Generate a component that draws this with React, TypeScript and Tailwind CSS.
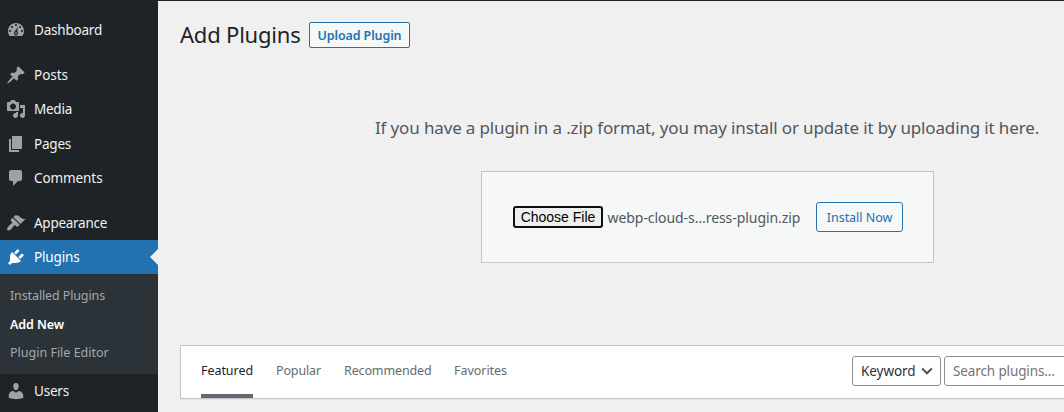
import type { ReactNode } from "react";

function Icon({ d }: { d: string }) {
  return (
    <svg viewBox="0 0 20 20" className="mr-2 ml-1.5 size-5 shrink-0 fill-current" fillRule="evenodd" aria-hidden="true">
      <path d={d} />
    </svg>
  );
}

const icons = {
  dashboard:
    "M3.76 16h12.48c1.1-1.37 1.76-3.11 1.76-5 0-4.42-3.58-8-8-8s-8 3.58-8 8c0 1.89.66 3.63 1.76 5zM10 4c.55 0 1 .45 1 1s-.45 1-1 1-1-.45-1-1 .45-1 1-1zM6 6c.55 0 1 .45 1 1s-.45 1-1 1-1-.45-1-1 .45-1 1-1zM14 6c.55 0 1 .45 1 1s-.45 1-1 1-1-.45-1-1 .45-1 1-1zM4 10c.55 0 1 .45 1 1s-.45 1-1 1-1-.45-1-1 .45-1 1-1zM16 10c.55 0 1 .45 1 1s-.45 1-1 1-1-.45-1-1 .45-1 1-1zM11.9 6.7L11.2 11c.5.5.8 1.2.8 2 0 1.5-.9 2.4-2 2.4s-2-.9-2-2.2c0-1 .5-1.7 1.1-2.3zM10 12.3c-.5 0-.9.4-.9.9s.4.9.9.9.9-.4.9-.9-.4-.9-.9-.9z",
  post: "M10.44 3.02l1.82-1.82 6.36 6.35-1.83 1.82c-1.05-.68-2.48-.57-3.41.36l-.75.75c-.92.93-1.04 2.35-.35 3.41l-1.83 1.82-2.41-2.41-2.8 2.79c-.42.42-3.38 2.71-3.8 2.29s1.86-3.39 2.28-3.81l2.79-2.79L4.1 9.36l1.83-1.82c1.05.69 2.48.57 3.4-.36l.75-.75c.93-.92 1.05-2.35.36-3.41z",
  media:
    "M13 11V4c0-.55-.45-1-1-1h-1.67L9.12 1.66C8.87 1.3 8.44 1 8 1H6c-.44 0-.87.3-1.12.66L3.67 3H2c-.55 0-1 .45-1 1v7c0 .55.45 1 1 1h10c.55 0 1-.45 1-1zM7 4.5c1.66 0 3 1.34 3 3s-1.34 3-3 3-3-1.34-3-3 1.34-3 3-3zM14 6h5v10.5c0 1.38-1.12 2.5-2.5 2.5S14 17.88 14 16.5s1.12-2.5 2.5-2.5c.17 0 .34.02.5.05V9h-3V6zm-4 8.05V13h2v3.5c0 1.38-1.12 2.5-2.5 2.5S7 17.88 7 16.5 8.12 14 9.5 14c.17 0 .34.02.5.05z",
  page: "M6 15V2h10v13H6zm-1 1h8v2H3V5h2v11z",
  comments: "M5 2h9c1.1 0 2 .9 2 2v7c0 1.1-.9 2-2 2h-2l-5 5v-5H5c-1.1 0-2-.9-2-2V4c0-1.1.9-2 2-2z",
  appearance:
    "M14.48 11.06L7.41 3.99l1.5-1.5c.5-.56 2.3-.47 3.51.32 1.21.8 1.43 1.28 2.91 2.1 1.18.64 2.45 1.26 4.45.85zm-.71.71L6.7 4.7 4.93 6.47c-.39.39-.39 1.02 0 1.41l1.06 1.06c.39.39.39 1.03 0 1.42-.6.6-1.43 1.11-2.21 1.69-.35.26-.7.53-1.01.84C1.43 14.23.4 16.08 1.4 17.07c.99 1 2.84-.03 4.18-1.36.31-.31.58-.66.85-1.02.57-.78 1.08-1.61 1.69-2.21.39-.39 1.02-.39 1.41 0l1.06 1.06c.39.39 1.02.39 1.41 0z",
  plugins:
    "M13.11 4.36L9.87 7.6 8 5.73l3.24-3.24c.35-.34 1.05-.2 1.56.32.52.51.66 1.21.31 1.55zm-8 1.77l.91-1.12 9.01 9.01-1.19.84c-.71.71-2.63 1.16-3.82 1.16H6.14L4.9 17.26c-.59.59-1.54.59-2.12 0-.59-.58-.59-1.53 0-2.12l1.24-1.24v-3.88c0-1.13.4-3.19 1.09-3.89zm7.26 3.97l3.24-3.24c.34-.35 1.04-.21 1.55.31.52.51.66 1.21.31 1.55l-3.24 3.25z",
  users:
    "M10 9.25c-2.27 0-2.73-3.44-2.73-3.44C7 4.02 7.82 2 9.97 2c2.16 0 2.98 2.02 2.71 3.81 0 0-.41 3.44-2.68 3.44zm0 2.57L12.72 10c2.39 0 4.52 2.33 4.52 4.53v2.49s-3.65 1.13-7.24 1.13c-3.65 0-7.24-1.13-7.24-1.13v-2.49c0-2.25 1.94-4.48 4.47-4.48z",
};

function MenuItem({ icon, tracking, children }: { icon: string; tracking: string; children: ReactNode }) {
  return (
    <a className="flex h-[34px] shrink-0 items-center text-[#9ca2a7]">
      <Icon d={icon} />
      <span className={`text-[13.5px] leading-5 text-[#f0f0f1] ${tracking}`}>{children}</span>
    </a>
  );
}

export default function App() {
  return (
    <div className="flex h-[412px] w-[1064px] overflow-hidden bg-[#f0f0f0] font-['Noto_Sans',sans-serif] text-[#3c434a]">
      <nav className="flex w-[158px] shrink-0 flex-col bg-[#1d2327] pt-[13px]">
        <MenuItem icon={icons.dashboard} tracking="tracking-[-0.21px]">Dashboard</MenuItem>
        <div className="h-[11px] shrink-0" />
        <MenuItem icon={icons.post} tracking="tracking-[-0.03px]">Posts</MenuItem>
        <MenuItem icon={icons.media} tracking="tracking-[-0.25px]">Media</MenuItem>
        <div className="h-px shrink-0" />
        <MenuItem icon={icons.page} tracking="tracking-[-0.22px]">Pages</MenuItem>
        <MenuItem icon={icons.comments} tracking="tracking-[-0.09px]">Comments</MenuItem>
        <div className="h-[11px] shrink-0" />
        <MenuItem icon={icons.appearance} tracking="tracking-[-0.27px]">Appearance</MenuItem>
        <a className="flex h-[34px] shrink-0 items-center bg-[#2271b1] text-white">
          <Icon d={icons.plugins} />
          <span className="text-[13.5px] leading-5 tracking-[-0.15px]">Plugins</span>
          <svg viewBox="0 0 8 16" className="ml-auto h-4 w-2 fill-[#f0f0f0]" aria-hidden="true">
            <path d="M8 0v16L0 8z" />
          </svg>
        </a>
        <div className="flex h-[100px] shrink-0 flex-col bg-[#2c3338] pt-[7px] pl-2.5 text-[12.5px] text-[#a3a8ad]">
          <a className="leading-[29px] tracking-[-0.12px]">Installed Plugins</a>
          <a className="leading-[29px] font-semibold tracking-[-0.09px] text-white">Add New</a>
          <a className="leading-[27px]">Plugin File Editor</a>
        </div>
        <MenuItem icon={icons.users} tracking="tracking-[-0.2px]">Users</MenuItem>
      </nav>

      <main className="min-w-0 flex-1 border-t border-[#1d2327] pl-[22px]">
        <header className="flex h-[68px] items-center">
          <h1 className="w-[129px] pb-0.5 text-[22px] whitespace-nowrap tracking-[-0.2px] text-[#1d2327]">Add Plugins</h1>
          <button className="h-[26px] w-[101px] rounded-[2px] border border-[#2271b1] bg-[#f6f7f7] pt-0.5 text-[12.5px] leading-5 font-semibold whitespace-nowrap tracking-[-0.11px] text-[#2271b1]">
            Upload Plugin
          </button>
        </header>

        <section className="flex h-[276px] flex-col pt-[45px] pl-[195px]">
          <p className="h-[57px] text-[17px] leading-7 whitespace-nowrap tracking-[-0.145px] text-[#50575e]">
            If you have a plugin in a .zip format, you may install or update it by uploading it here.
          </p>
          <form className="ml-[106px] flex h-[92px] w-[453px] items-center border border-[#c3c4c7] bg-[#f6f7f7] pl-[31px]">
            <button type="button" className="h-[22px] w-[90px] rounded-[3px] border-2 border-[#101010] bg-[#efefef] font-['Liberation_Sans',sans-serif] text-sm leading-4 whitespace-nowrap text-black">
              Choose File
            </button>
            <span className="ml-[4.5px] w-[208.5px] text-[14px] whitespace-nowrap tracking-[-0.06px] text-[#50575e]">webp-cloud-s…ress-plugin.zip</span>
            <button type="button" className="h-[30px] w-[87px] rounded-[3px] border border-[#2271b1] pt-0.5 text-[12.5px] leading-5 whitespace-nowrap tracking-[-0.04px] text-[#2271b1]">
              Install Now
            </button>
          </form>
        </section>

        <section className="flex h-[54px] border border-r-0 border-[#c3c4c7] bg-white pl-5 shadow-[0_1px_1px_rgba(0,0,0,0.04)]">
          <div className="flex w-[651px] shrink-0 gap-[23px] text-[12.5px] leading-[50px] text-[#646970]">
            <a className="h-[52px] w-[52px] border-b-4 border-[#646970] tracking-[-0.05px] text-[#1d2327]">Featured</a>
            <a className="w-[45px] tracking-[-0.14px]">Popular</a>
            <a className="w-[87px] tracking-[-0.13px]">Recommended</a>
            <a className="tracking-[-0.04px]">Favorites</a>
          </div>
          <div className="flex shrink-0 items-start gap-[3px] pt-2.5">
            <div className="flex h-[30px] w-[89px] items-center justify-between rounded-[3px] border border-[#8c8f94] pr-[7px] pl-2 text-[13.5px] tracking-[-0.07px] text-[#2c3338]">
              Keyword
              <svg viewBox="0 0 12 12" className="size-3 fill-none stroke-[#555] stroke-2" aria-hidden="true">
                <path d="M1.2 3.5L6 8.3l4.8-4.8" />
              </svg>
            </div>
            <div className="flex h-[30px] w-[190px] shrink-0 items-center rounded-[3px] border border-[#8c8f94] pl-2 text-[13.5px] whitespace-nowrap tracking-[-0.12px] text-[#757575]">
              Search plugins...
            </div>
          </div>
        </section>
      </main>
    </div>
  );
}
